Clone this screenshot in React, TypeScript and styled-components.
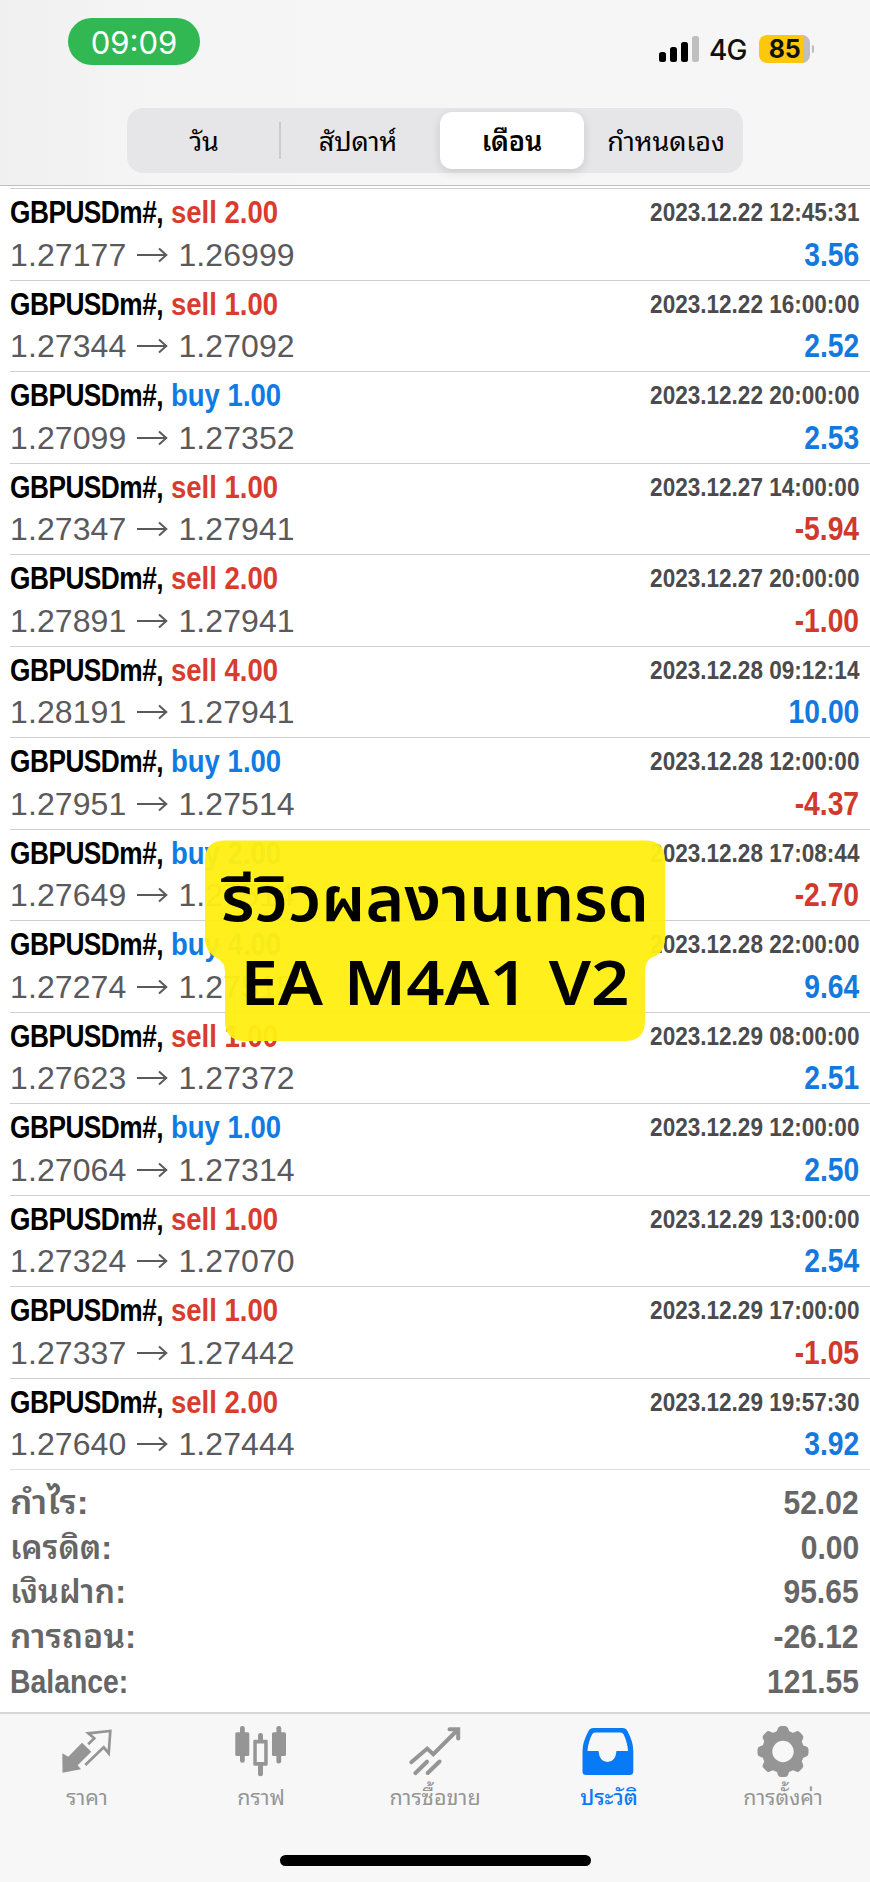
import React from "react";
import styled, { createGlobalStyle } from "styled-components";

const THAI = `"Thonburi", "Noto Sans Thai Looped", "Loma", "Waree", "Garuda", "Noto Sans Thai", "Noto Sans", sans-serif`;
const SANS = `"Liberation Sans", ${THAI}`;

const GlobalStyle = createGlobalStyle`
  * { box-sizing: border-box; }
  body { margin: 0; background: #fff; }
`;

const Screen = styled.main`
  position: relative;
  width: 870px;
  height: 1882px;
  display: flex;
  flex-direction: column;
  overflow: hidden;
  background: #fff;
  font-family: ${SANS};
`;

const Header = styled.header`
  flex: none;
  height: 186px;
  background: linear-gradient(90deg, #f0f0f0 0, #f5f5f6 160px, #f6f6f6 100%);
  border-bottom: 1px solid #bfbfc1;
  display: flex;
  flex-direction: column;
  align-items: center;
`;

const StatusBar = styled.div`
  width: 100%;
  height: 108px;
  display: flex;
  justify-content: space-between;
  align-items: flex-start;
  padding: 18px 56px 0 68px;
`;

const TimePill = styled.div`
  width: 132px;
  height: 47px;
  border-radius: 24px;
  background: #32b853;
  color: #fff;
  font: 400 31px/49px Inter, sans-serif;
  text-align: center;
`;

const StatusIcons = styled.div`
  display: flex;
  align-items: center;
  height: 28px;
  margin-top: 17px;
`;

const Network = styled.span`
  width: 38px;
  margin: 1px 12px 0 10px;
  font: 500 28px/28px Inter, sans-serif;
  letter-spacing: -0.8px;
  color: #111;
`;

const Battery = styled.span`
  width: 51px;
  height: 28px;
  border-radius: 8px;
  background: linear-gradient(90deg, #fdc70b 44px, #c0bfc0 44px);
  font: 700 25px/29px Inter, sans-serif;
  letter-spacing: -0.3px;
  text-align: center;
  color: #111;
`;

const BatteryTip = styled.span`
  width: 2px;
  height: 8px;
  margin-left: 2px;
  border-radius: 0 2px 2px 0;
  background: #bbb;
`;

const Segments = styled.div`
  width: 616px;
  height: 65px;
  padding: 4px 0;
  display: flex;
  border-radius: 16px;
  background: #e6e5e7;
`;

const Segment = styled.button<{ $active?: boolean; $divider?: boolean }>`
  position: relative;
  flex: 1 1 0;
  min-width: 0;
  border: 0;
  padding: 0 0 4px;
  margin: 0 5px;
  border-radius: 12px;
  background: ${(p) => (p.$active ? "#fff" : "transparent")};
  box-shadow: ${(p) => (p.$active ? "0 3px 10px rgba(0,0,0,.12)" : "none")};
  font: ${(p) => (p.$active ? 600 : 400)} 27px/52px ${THAI};
  letter-spacing: -0.1px;
  color: #000;
  white-space: nowrap;
  &::after {
    content: "";
    display: ${(p) => (p.$divider ? "block" : "none")};
    position: absolute;
    right: -5px;
    top: 10px;
    width: 2px;
    height: 37px;
    background: #cbcacc;
  }
`;

const DealList = styled.section`
  flex: none;
  padding-top: 2px;
`;

const Deal = styled.article`
  height: 91.5px;
  margin-left: 10px;
  padding: 5px 11px 0 0;
  border-top: 1px solid #cfcfd1;
`;

const Line = styled.div<{ $h: number }>`
  display: flex;
  justify-content: space-between;
  align-items: center;
  height: ${(p) => p.$h}px;
  white-space: nowrap;
`;

/* Bold text whose width is scaled towards one edge. */
const Condensed = styled.span<{ $scale: number; $edge?: "left" | "right" }>`
  display: inline-block;
  font-weight: 700;
  transform: scaleX(${(p) => p.$scale});
  transform-origin: ${(p) => p.$edge ?? "left"} center;
`;

const Title = styled.div`
  display: flex;
  font-size: 32px;
  line-height: 36px;
`;

const Instrument = styled(Condensed)`
  width: 160.5px;
  letter-spacing: -0.6px;
  color: #000;
`;

const Side = styled(Condensed)<{ $sell: boolean }>`
  color: ${(p) => (p.$sell ? "#d93c2e" : "#0f7be3")};
`;

const Stamp = styled(Condensed)`
  font-size: 26px;
  line-height: 34px;
  color: #4b4b4d;
`;

const Prices = styled.span`
  display: flex;
  align-items: center;
  gap: 10.5px;
  color: #5a5a5c;
  font-size: 32px;
  line-height: 40px;
  letter-spacing: 0.1px;
`;

const Profit = styled(Condensed)<{ $loss: boolean }>`
  font-size: 32.5px;
  line-height: 40px;
  color: ${(p) => (p.$loss ? "#d0392c" : "#1379de")};
`;

const Summary = styled.section`
  flex: 1;
  margin-left: 10px;
  padding: 10px 11px 0 0;
  border-top: 1px solid #dedee0;
`;

const SummaryRow = styled.div`
  height: 44.7px;
  display: flex;
  justify-content: space-between;
  color: #666;
  font-size: 33px;
  line-height: 45px;
`;

const SummaryLabel = styled(Condensed)`
  font-weight: 600;
`;

const TabBar = styled.nav`
  flex: none;
  height: 170px;
  display: flex;
  position: relative;
  background: #f7f7f7;
  border-top: 2px solid #d6d6d7;
`;

const Tab = styled.button<{ $active?: boolean }>`
  flex: 1 1 0;
  min-width: 0;
  border: 0;
  padding: 10px 0 0;
  background: none;
  display: flex;
  flex-direction: column;
  align-items: center;
  color: ${(p) => (p.$active ? "#087af5" : "#959595")};
  svg { flex: none; display: block; }
`;

const TabLabel = styled.span<{ $active?: boolean }>`
  margin-top: 1px;
  font: ${(p) => (p.$active ? 500 : 400)} 21.5px/30px ${THAI};
  white-space: nowrap;
`;

const HomeIndicator = styled.div`
  position: absolute;
  left: 280px;
  top: 1855px;
  width: 311px;
  height: 11px;
  border-radius: 6px;
  background: #000;
`;

const Sticker = styled.div`
  position: absolute;
  left: 205px;
  top: 840px;
  width: 460px;
  height: 202px;
`;

const StickerShape = styled.svg`
  position: absolute;
  inset: 0;
`;

const StickerText = styled.p<{ $top: number; $size: number; $scale: number; $gap?: number }>`
  position: absolute;
  left: 0;
  right: 0;
  top: ${(p) => p.$top}px;
  margin: 0;
  text-align: center;
  font: 600 ${(p) => p.$size}px/80px "Noto Sans", "Noto Sans Thai", sans-serif;
  word-spacing: ${(p) => p.$gap ?? 0}px;
  transform: scaleX(${(p) => p.$scale});
  white-space: nowrap;
  color: #000;
`;

type DealData = [side: "sell" | "buy", lots: string, open: string, close: string, time: string, profit: string];

const deals: DealData[] = [
  ["sell", "2.00", "1.27177", "1.26999", "2023.12.22 12:45:31", "3.56"],
  ["sell", "1.00", "1.27344", "1.27092", "2023.12.22 16:00:00", "2.52"],
  ["buy", "1.00", "1.27099", "1.27352", "2023.12.22 20:00:00", "2.53"],
  ["sell", "1.00", "1.27347", "1.27941", "2023.12.27 14:00:00", "-5.94"],
  ["sell", "2.00", "1.27891", "1.27941", "2023.12.27 20:00:00", "-1.00"],
  ["sell", "4.00", "1.28191", "1.27941", "2023.12.28 09:12:14", "10.00"],
  ["buy", "1.00", "1.27951", "1.27514", "2023.12.28 12:00:00", "-4.37"],
  ["buy", "2.00", "1.27649", "1.27514", "2023.12.28 17:08:44", "-2.70"],
  ["buy", "4.00", "1.27274", "1.27515", "2023.12.28 22:00:00", "9.64"],
  ["sell", "1.00", "1.27623", "1.27372", "2023.12.29 08:00:00", "2.51"],
  ["buy", "1.00", "1.27064", "1.27314", "2023.12.29 12:00:00", "2.50"],
  ["sell", "1.00", "1.27324", "1.27070", "2023.12.29 13:00:00", "2.54"],
  ["sell", "1.00", "1.27337", "1.27442", "2023.12.29 17:00:00", "-1.05"],
  ["sell", "2.00", "1.27640", "1.27444", "2023.12.29 19:57:30", "3.92"],
];

const totals: { label: string; value: string; scale: number }[] = [
  { label: "กำไร:", value: "52.02", scale: 1.07 },
  { label: "เครดิต:", value: "0.00", scale: 0.98 },
  { label: "เงินฝาก:", value: "95.65", scale: 0.98 },
  { label: "การถอน:", value: "-26.12", scale: 1.02 },
  { label: "Balance:", value: "121.55", scale: 0.86 },
];

const Arrow = () => (
  <svg width="31" height="16" viewBox="0 0 31 16" fill="none" stroke="currentColor" strokeWidth="2">
    <path d="M0 8H29M22 1.5L29.3 8L22 14.5" />
  </svg>
);

const Signal = () => (
  <svg width="40" height="26" viewBox="0 0 40 26" fill="#000">
    <rect x="0" y="16" width="7" height="10" rx="2.5" />
    <rect x="11" y="11" width="7" height="15" rx="2.5" />
    <rect x="22" y="6" width="7" height="20" rx="2.5" />
    <rect x="33" y="0" width="7" height="26" rx="2.5" fill="#bfbfbf" />
  </svg>
);

const QuotesIcon = () => (
  <svg width="60" height="56" viewBox="0 0 60 56" fill="none">
    <path fill="currentColor" d="M5.3 29.3L11.3 32.7L25 18.7L34.3 27.7L20.7 41.3L24 45.3L5.5 48.7Z" />
    <path stroke="currentColor" strokeWidth="2.7" d="M31.2 20.2L37.3 14.3L31.3 9.3L53.3 7L51.7 29.3L46.7 23.3L28.3 41" />
  </svg>
);

const ChartIcon = () => (
  <svg width="60" height="56" viewBox="0 0 60 56" fill="currentColor">
    <rect x="4.3" y="8.3" width="14" height="23.7" rx="1.5" />
    <rect x="9" y="2" width="4.8" height="36.7" rx="2.2" />
    <path fillRule="evenodd" d="M22.3 17Q22.3 15.7 23.6 15.7H35.4Q36.7 15.7 36.7 17V40.4Q36.7 41.7 35.4 41.7H23.6Q22.3 41.7 22.3 40.4ZM25.8 19.5V38H33.2V19.5Z" />
    <path d="M27 16V11.4A2.4 2.4 0 0 1 32 11.4V16ZM27 41H32V49.8A2.4 2.4 0 0 1 27 49.8Z" />
    <rect x="41" y="8.3" width="14" height="23.7" rx="1.5" />
    <rect x="45.4" y="2" width="4.8" height="37.5" rx="2.2" />
  </svg>
);

const TradeIcon = () => (
  <svg width="60" height="56" viewBox="0 0 60 56" fill="none" stroke="currentColor" strokeWidth="4" strokeLinecap="round" strokeLinejoin="miter">
    <path d="M6.3 38.3L22.2 24.6L28.3 30.2L53 5.5M44.5 5.2H53.2V14.5M10.3 49.2L22 37.7M22.7 49L34.6 37.5" />
  </svg>
);

const HistoryIcon = () => (
  <svg width="60" height="56" viewBox="1.5 0 60 56" fill="currentColor">
    <path fillRule="evenodd" d="M16 4H45Q48.5 4 50 7Q55.8 18 55.8 27V47.5Q55.8 51 52 51H8.8Q5 51 5 47.5V27Q5 18 11 7Q12.5 4 16 4ZM17.5 8.5Q15.5 8.5 14.7 10.2Q10.5 18 10 27H21Q22 38 30 38Q38 38 39 27H50.5Q50 18 46 10.2Q45 8.5 43 8.5Z" />
  </svg>
);

const gearAngles = Array.from({ length: 8 }, (_, i) => i * 45);

const SettingsIcon = () => (
  <svg width="60" height="56" viewBox="0 0 60 56">
    <g fill="currentColor">
      {gearAngles.map((a) => (
        <path key={a} transform={`rotate(${a} 30 27.5)`} d="M22.4 9Q24 7.8 24.8 4.6Q25.6 2 28 2H32Q34.4 2 35.2 4.6Q36 7.8 37.6 9L34 15H26Z" />
      ))}
    </g>
    <circle cx="30" cy="27.5" r="15.9" fill="none" stroke="currentColor" strokeWidth="10.4" />
  </svg>
);

const tabs = [
  { label: "ราคา", icon: <QuotesIcon /> },
  { label: "กราฟ", icon: <ChartIcon /> },
  { label: "การซื้อขาย", icon: <TradeIcon /> },
  { label: "ประวัติ", icon: <HistoryIcon />, active: true },
  { label: "การตั้งค่า", icon: <SettingsIcon /> },
];

export default function App() {
  return (
    <Screen>
      <GlobalStyle />
      <Header>
        <StatusBar>
          <TimePill>09:09</TimePill>
          <StatusIcons>
            <Signal />
            <Network>4G</Network>
            <Battery>85</Battery>
            <BatteryTip />
          </StatusIcons>
        </StatusBar>
        <Segments>
          <Segment $divider>วัน</Segment>
          <Segment>สัปดาห์</Segment>
          <Segment $active>เดือน</Segment>
          <Segment>กำหนดเอง</Segment>
        </Segments>
      </Header>
      <DealList>
        {deals.map(([side, lots, open, close, time, profit]) => (
          <Deal key={time}>
            <Line $h={36}>
              <Title>
                <Instrument $scale={0.82}>GBPUSDm#,</Instrument>
                <Side $scale={0.86} $sell={side === "sell"}>
                  {side} {lots}
                </Side>
              </Title>
              <Stamp $scale={0.867} $edge="right">{time}</Stamp>
            </Line>
            <Line $h={49}>
              <Prices>
                {open}
                <Arrow />
                {close}
              </Prices>
              <Profit $scale={0.87} $edge="right" $loss={profit.startsWith("-")}>
                {profit}
              </Profit>
            </Line>
          </Deal>
        ))}
      </DealList>
      <Summary>
        {totals.map(({ label, value, scale }) => (
          <SummaryRow key={label}>
            <SummaryLabel $scale={scale}>{label}</SummaryLabel>
            <Condensed $scale={0.91} $edge="right">{value}</Condensed>
          </SummaryRow>
        ))}
      </Summary>
      <TabBar>
        {tabs.map((t) => (
          <Tab key={t.label} $active={t.active}>
            {t.icon}
            <TabLabel $active={t.active}>{t.label}</TabLabel>
          </Tab>
        ))}
      </TabBar>
      <HomeIndicator />
      <Sticker>
        <StickerShape width="460" height="202" viewBox="0 0 460 202">
          <path
            fill="#ffee13"
            fillOpacity="0.96"
            d="M20 0.5H440Q460 0.5 460 20V98Q460 113 448 117Q440 120 440 132V181Q440 201 420 201H40Q20 201 20 181V132Q20 122 12 118Q0 112 0 98V20Q0 0.5 20 0.5Z"
          />
        </StickerShape>
        <StickerText $top={17} $size={62} $scale={1.065}>รีวิวผลงานเทรด</StickerText>
        <StickerText $top={102} $size={61} $scale={1.1} $gap={3}>EA M4A1 V2</StickerText>
      </Sticker>
    </Screen>
  );
}
